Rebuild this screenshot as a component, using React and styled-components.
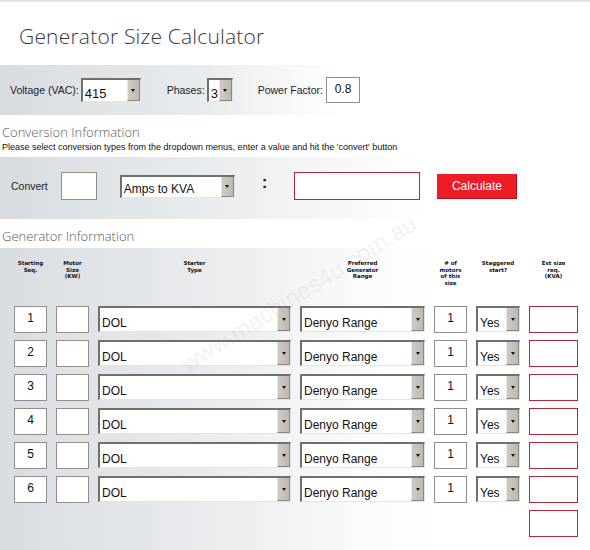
import React from 'react';
import styled, { createGlobalStyle } from 'styled-components';

const Global = createGlobalStyle`
    body {
        margin: 0;
        background: #fff;
        font-family: "Liberation Sans", Arial, sans-serif;
        color: #222;
    }
`

const Page = styled.div`
    position: relative;
    width: 590px;
    height: 550px;
    overflow: hidden;
    border-top: 2px solid #e2e2e2;
    box-sizing: border-box;
`

const Title = styled.h1`
    margin: 0;
    padding: 20px 0 0 19px;
    height: 43px;
    font-family: "Open Sans", sans-serif;
    font-weight: 300;
    font-size: 21px;
    color: #3a3a3a;
    letter-spacing: 0.2px;
`

const Panel = styled.div`
    background: linear-gradient(to right, #d8dce0 0%, #e9ecee 35%, #fff ${p => p.$fade || '58%'});
    display: flex;
    align-items: center;
`

const TopBar = styled(Panel)`
    height: 50px;
    padding-left: 10px;
`

const Label = styled.span`
    font-size: 10.5px;
    color: #222;
    margin-right: ${p => p.$mr || 2}px;
`

const Group = styled.div`
    display: flex;
    align-items: center;
    margin-left: ${p => p.$ml || 0}px;
    margin-right: ${p => p.$mr || 0}px;
`

const SelectBox = styled.div`
    width: ${p => p.$w}px;
    height: ${p => p.$h || 24}px;
    box-sizing: border-box;
    background: #fff;
    border-top: 2px solid #6f6f6f;
    border-left: 2px solid #6f6f6f;
    border-right: 1px solid #e4e4e4;
    border-bottom: 1px solid #e4e4e4;
    display: flex;
    align-items: stretch;
`

const SelectText = styled.span`
    flex: 1;
    font-size: ${p => p.$fs || 12}px;
    padding: ${p => p.$pt || 6}px 0 0 2px;
    color: #111;
    white-space: nowrap;
    overflow: hidden;
`

const SelectButton = styled.span`
    width: 11px;
    background: linear-gradient(to right, #cfcbc3, #bdb9b1);
    border-left: 1px solid #e8e6e2;
    border-bottom: 1px solid #8a8680;
    border-right: 1px solid #8a8680;
    display: flex;
    align-items: center;
    justify-content: center;

    &::after {
        content: '';
        border-left: 2px solid transparent;
        border-right: 2px solid transparent;
        border-top: 3px solid #111;
    }
`

const Select = ({ w, h, value, fs, pt }) => (
    <SelectBox $w={w} $h={h}>
        <SelectText $fs={fs} $pt={pt}>{value}</SelectText>
        <SelectButton />
    </SelectBox>
)

const Box = styled.div`
    width: ${p => p.$w}px;
    height: ${p => p.$h || 27}px;
    box-sizing: border-box;
    background: #fff;
    border: 1px solid ${p => (p.$red ? '#b0283a' : '#8e8e8e')};
    font-size: 12px;
    text-align: center;
    padding-top: 4px;
    color: #111;
`

const SectionTitle = styled.h2`
    margin: 0;
    padding: ${p => p.$pt || 8}px 0 0 2px;
    font-family: "Open Sans", sans-serif;
    font-weight: 300;
    font-size: 13px;
    color: #5a5a5a;
`

const Note = styled.p`
    margin: 0;
    padding: 1px 0 5px 2px;
    font-size: 9px;
    color: #111;
`

const ConvertBar = styled(Panel)`
    height: 62px;
    padding-left: 11px;
    padding-bottom: 4px;
    box-sizing: border-box;
`

const Colon = styled.span`
    font-size: 17px;
    font-weight: bold;
    margin: -6px 27px 0 27px;
`

const CalcButton = styled.button`
    width: 80px;
    height: 25px;
    margin-left: 17px;
    background: #ee1c25;
    border: none;
    border-bottom: 1px solid #b3121a;
    border-right: 1px solid #b3121a;
    color: #fff;
    font-family: "Liberation Sans", Arial, sans-serif;
    font-size: 12px;
    padding: 0;
`

const GenPanel = styled.div`
    margin-top: 3px;
    height: 312px;
    padding: 12px 0 0 14px;
    box-sizing: border-box;
    background: linear-gradient(to right, #d9dde1 0%, #eceef0 40%, #fafafa 60%, #fff 75%);
`

const Grid = styled.div`
    display: grid;
    grid-template-columns: 33px 33px 193px 125px 33px 44px 49px;
    column-gap: 9px;
    row-gap: 7px;
    align-items: start;
    position: relative;
    z-index: 1;
`

const Head = styled.div`
    height: 36px;
    font-family: "DejaVu Sans", sans-serif;
    font-weight: bold;
    font-size: 5.5px;
    line-height: 6.5px;
    text-align: center;
    color: #111;
    margin: 0 -6px 3px;
`

const Watermark = styled.div`
    position: absolute;
    left: 176px;
    top: 352px;
    font-family: "Liberation Sans", Arial, sans-serif;
    font-size: 24px;
    color: rgba(120, 120, 120, 0.1);
    transform: rotate(-32deg);
    transform-origin: left top;
    white-space: nowrap;
    pointer-events: none;
    z-index: 2;
`

const heads = [
    ['Starting', 'Seq.'],
    ['Motor', 'Size', '(KW)'],
    ['Starter', 'Type'],
    ['Preferred', 'Generator', 'Range'],
    ['# of', 'motors', 'of this', 'size'],
    ['Staggered', 'start?'],
    ['Est size', 'req.', '(KVA)'],
]

const rows = [1, 2, 3, 4, 5, 6]

const App = () => {
    return (
        <Page>
            <Global />
            <Title>Generator Size Calculator</Title>
            <TopBar>
                <Group $mr={26}>
                    <Label>Voltage (VAC):</Label>
                    <Select w={60} h={24} value="415" fs={13} pt={6} />
                </Group>
                <Group $mr={25}>
                    <Label $mr={2}>Phases:</Label>
                    <Select w={26} h={24} value="3" fs={13} pt={6} />
                </Group>
                <Group>
                    <Label $mr={3}>Power Factor:</Label>
                    <Box $w={34} $h={26}>0.8</Box>
                </Group>
            </TopBar>

            <SectionTitle $pt={8}>Conversion Information</SectionTitle>
            <Note>Please select conversion types from the dropdown menus, enter a value and hit the 'convert' button</Note>
            <ConvertBar $fade="72%">
                <Label $mr={13}>Convert</Label>
                <Box $w={36} $h={28} />
                <Group $ml={23}>
                    <Select w={115} h={23} value="Amps to KVA" fs={12} pt={5} />
                </Group>
                <Colon>:</Colon>
                <Box $w={126} $h={28} $red />
                <CalcButton>Calculate</CalcButton>
            </ConvertBar>

            <SectionTitle $pt={8}>Generator Information</SectionTitle>
            <GenPanel>
                <Grid>
                    {heads.map((h, i) => (
                        <Head key={i}>
                            {h.map((l, j) => <div key={j}>{l}</div>)}
                        </Head>
                    ))}
                    {rows.map(n => (
                        <React.Fragment key={n}>
                            <Box $w={33}>{n}</Box>
                            <Box $w={33} />
                            <Select w={193} h={26} value="DOL" fs={12} pt={8} />
                            <Select w={125} h={26} value="Denyo Range" fs={12} pt={8} />
                            <Box $w={33}>1</Box>
                            <Select w={44} h={26} value="Yes" fs={12} pt={8} />
                            <Box $w={49} $red />
                        </React.Fragment>
                    ))}
                    <div style={{ gridColumn: 7 }}>
                        <Box $w={49} $red />
                    </div>
                </Grid>
            </GenPanel>
            <Watermark>www.machines4u.com.au</Watermark>
        </Page>
    );
}

export default App;
